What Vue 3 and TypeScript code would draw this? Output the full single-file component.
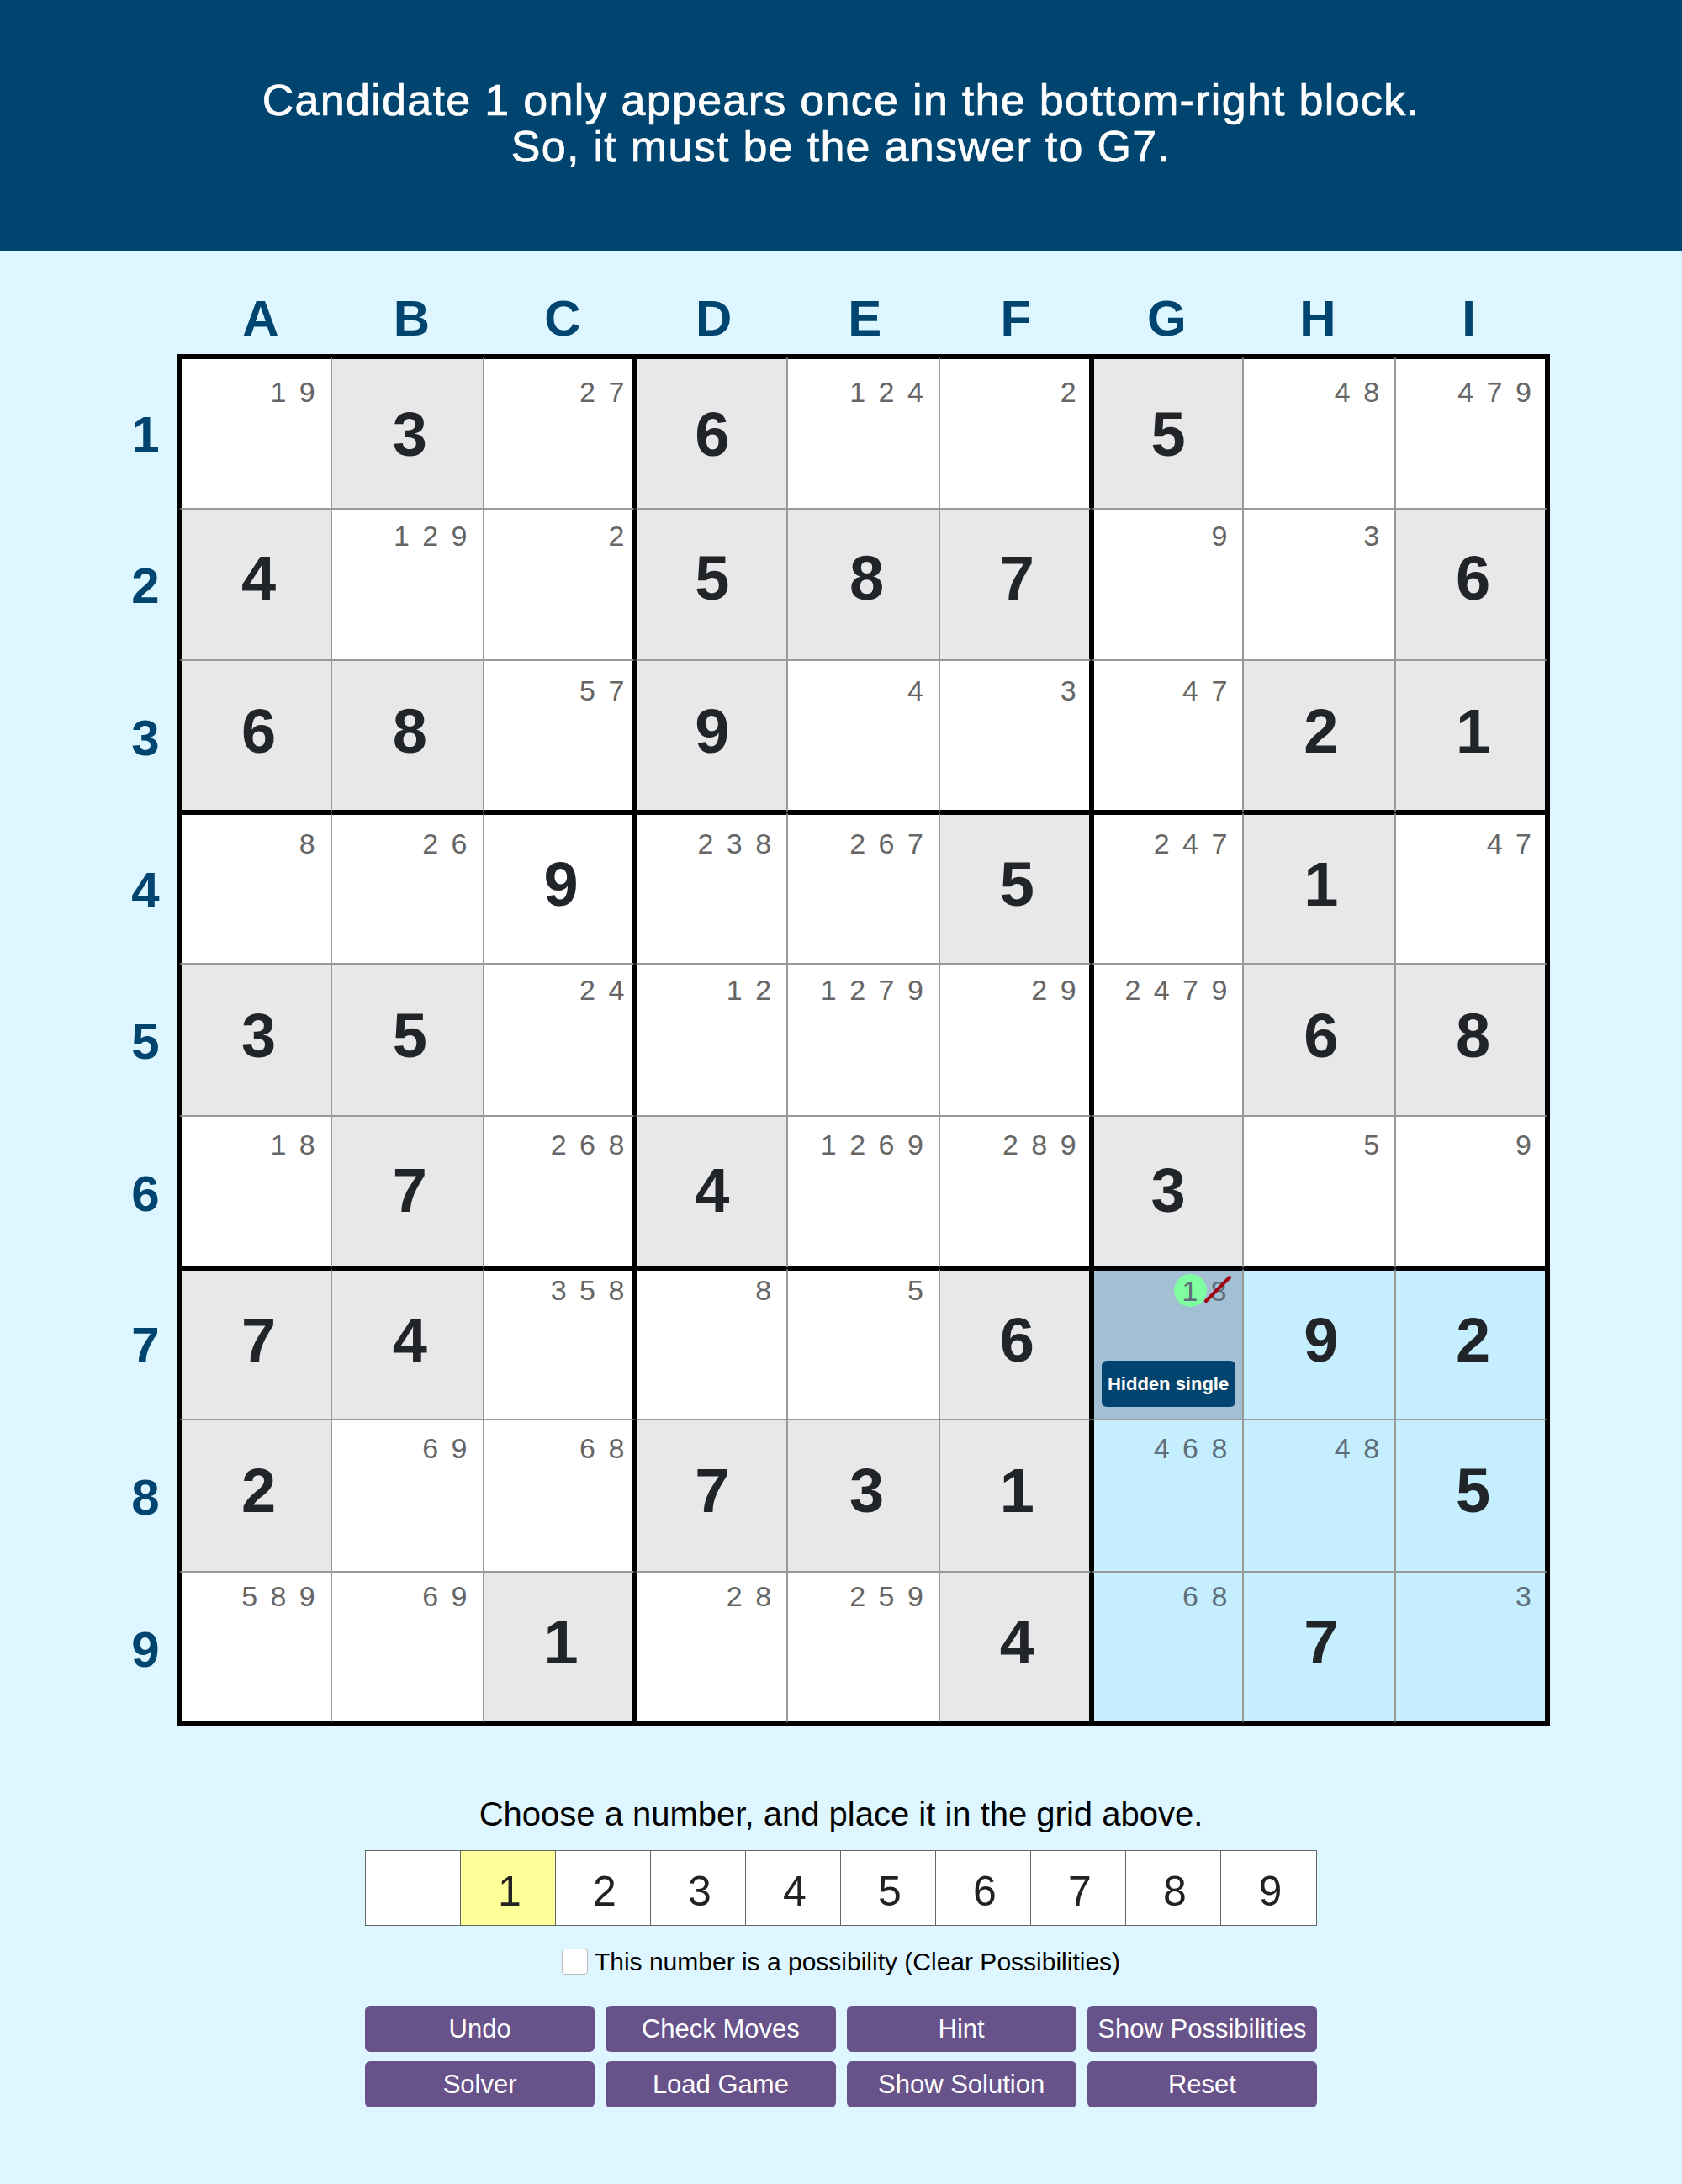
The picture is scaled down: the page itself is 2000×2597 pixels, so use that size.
<script setup lang="ts">
type Cell = { value?: number; cands?: string };

const givens = [
  "030600500",
  "400587006",
  "680900021",
  "009005010",
  "350000068",
  "070400300",
  "740006092",
  "200731005",
  "001004070",
];
const candidates: Record<string, string> = {
  "0,0": "1 9", "0,2": "2 7", "0,4": "1 2 4", "0,5": "2", "0,7": "4 8", "0,8": "4 7 9",
  "1,1": "1 2 9", "1,2": "2", "1,6": "9", "1,7": "3",
  "2,2": "5 7", "2,4": "4", "2,5": "3", "2,6": "4 7",
  "3,0": "8", "3,1": "2 6", "3,3": "2 3 8", "3,4": "2 6 7", "3,6": "2 4 7", "3,8": "4 7",
  "4,2": "2 4", "4,3": "1 2", "4,4": "1 2 7 9", "4,5": "2 9", "4,6": "2 4 7 9",
  "5,0": "1 8", "5,2": "2 6 8", "5,4": "1 2 6 9", "5,5": "2 8 9", "5,7": "5", "5,8": "9",
  "6,2": "3 5 8", "6,3": "8", "6,4": "5",
  "7,1": "6 9", "7,2": "6 8", "7,6": "4 6 8", "7,7": "4 8",
  "8,0": "5 8 9", "8,1": "6 9", "8,3": "2 8", "8,4": "2 5 9", "8,6": "6 8", "8,8": "3",
};

const candTop = [30, 20, 24, 25, 19, 22, 14, 22, 17];
const candRight = [15, 15, 7, 15, 15, 12, 15, 15, 13];
const digitShiftY = [2, -7, -4, -5, -5, 0, -5, -5, -5];
const digitShiftX = [3, 3, 3, 0, 4, 3, 0, 2, 3];

const cells: (Cell & { r: number; c: number })[] = [];
for (let r = 0; r < 9; r++) {
  for (let c = 0; c < 9; c++) {
    const v = Number(givens[r][c]);
    cells.push({ r, c, value: v || undefined, cands: candidates[`${r},${c}`] });
  }
}

function cellClass(cell: { r: number; c: number; value?: number }) {
  const { r, c, value } = cell;
  const isTarget = r === 6 && c === 6;
  const inBlock = r >= 6 && c >= 6;
  const plainGiven = r === 3 && c === 2;
  return {
    given: !!value && !inBlock && !plainGiven,
    block: inBlock && !isTarget,
    target: isTarget,
    "thick-l": c % 3 === 0,
    "thick-r": c % 3 === 2,
    "thick-t": r % 3 === 0,
    "thick-b": r % 3 === 2,
  };
}
function candStyle(cell: { r: number; c: number }) {
  const borderTop = cell.r % 3 === 0 ? 3 : 1;
  return {
    paddingTop: `${candTop[cell.r] - 5 - borderTop}px`,
    paddingRight: `${candRight[cell.c]}px`,
  };
}
function digitStyle(cell: { r: number; c: number }) {
  return {
    marginTop: `${digitShiftY[cell.r] * 2}px`,
    marginLeft: `calc(50% - 20.5px + ${digitShiftX[cell.c]}px)`,
  };
}

const columns = ["A", "B", "C", "D", "E", "F", "G", "H", "I"];
const picker = ["", "1", "2", "3", "4", "5", "6", "7", "8", "9"];
const buttons = [
  "Undo", "Check Moves", "Hint", "Show Possibilities",
  "Solver", "Load Game", "Show Solution", "Reset",
];
</script>

<template>
  <div class="page">
    <header class="banner">
      <p>Candidate 1 only appears once in the bottom-right block.<br />So, it must be the answer to G7.</p>
    </header>

    <div class="col-labels">
      <span v-for="l in columns" :key="l">{{ l }}</span>
    </div>

    <div class="board-row">
      <div class="row-labels">
        <span v-for="n in 9" :key="n">{{ n }}</span>
      </div>
      <div class="board">
        <div v-for="cell in cells" :key="`${cell.r}-${cell.c}`" class="cell" :class="cellClass(cell)">
          <span v-if="cell.value" class="digit" :style="digitStyle(cell)">{{ cell.value }}</span>
          <div v-else-if="cell.cands" class="cand" :style="candStyle(cell)">{{ cell.cands }}</div>
          <template v-if="cell.r === 6 && cell.c === 6">
            <span class="mark"></span>
            <span class="cand-one">1</span>
            <span class="cand-eight">8</span>
            <svg class="strike" width="34" height="34" viewBox="0 0 34 34">
              <line x1="3" y1="31" x2="31" y2="3" stroke="#a00010" stroke-width="4" stroke-linecap="round" />
            </svg>
            <span class="badge">Hidden single</span>
          </template>
        </div>
      </div>
    </div>

    <p class="instruction">Choose a number, and place it in the grid above.</p>

    <div class="picker">
      <div v-for="(p, i) in picker" :key="i" class="pick" :class="{ active: p === '1' }">{{ p }}</div>
    </div>

    <label class="possibility">
      <span class="box"></span>
      <span>This number is a possibility (Clear Possibilities)</span>
    </label>

    <div class="buttons">
      <button v-for="b in buttons" :key="b" type="button">{{ b }}</button>
    </div>
  </div>
</template>

<style scoped>
.page {
  width: 2000px;
  height: 2597px;
  background: #ddf6ff;
  font-family: "Liberation Sans", Arial, sans-serif;
  display: flex;
  flex-direction: column;
  align-items: center;
  overflow: hidden;
}
.banner {
  width: 100%;
  height: 298px;
  flex: none;
  background: #004570;
  color: #fff;
  display: flex;
  align-items: center;
  justify-content: center;
  text-align: center;
  box-sizing: border-box;
  padding-bottom: 5px;
}
.banner p {
  margin: 0;
  font-size: 52px;
  line-height: 55px;
  letter-spacing: 1.3px;
  -webkit-text-stroke: 0.7px #fff;
}
.col-labels {
  align-self: flex-start;
  margin: 46px 0 7px 220px;
  display: grid;
  grid-template-columns: repeat(9, 179.6px);
  text-align: center;
  font-size: 60px;
  line-height: 70px;
  font-weight: 700;
  color: #004570;
}
.board-row {
  align-self: flex-start;
  display: flex;
}
.row-labels {
  width: 210px;
  box-sizing: border-box;
  padding: 5px 0 0 133px;
  display: grid;
  grid-template-rows: repeat(9, 180.6px);
  align-content: start;
  font-size: 60px;
  font-weight: 700;
  color: #004570;
}
.row-labels span {
  width: 80px;
  display: flex;
  align-items: center;
  justify-content: center;
}
.board {
  border: 3px solid #000;
  display: grid;
  grid-template-columns: repeat(9, 180.78px);
  grid-template-rows: repeat(9, 180.6px);
  background: #fff;
}
.cell {
  position: relative;
  box-sizing: border-box;
  border: 1px solid #999;
  background: #fff;
  display: flex;
  align-items: flex-start;
  justify-content: flex-end;
}
.cell.thick-l { border-left: 3px solid #000; }
.cell.thick-r { border-right: 3px solid #000; }
.cell.thick-t { border-top: 3px solid #000; }
.cell.thick-b { border-bottom: 3px solid #000; }
.cell.given { background: #e8e8e8; }
.cell.block { background: #c5efff; }
.cell.target { background: #a3bfd3; }
.digit {
  align-self: center;
  margin-right: auto;
  font-size: 74px;
  line-height: 1;
  font-weight: 700;
  color: #212529;
}
.cand {
  font-size: 34px;
  line-height: 34px;
  letter-spacing: 3px;
  white-space: pre;
  color: #666;
}
.cell.block .cand { color: #5f6e7a; }
.mark {
  position: absolute;
  left: 95px;
  top: 4px;
  width: 39px;
  height: 39px;
  border-radius: 50%;
  background: #7fff9f;
}
.cand-one,
.cand-eight {
  position: absolute;
  top: 7px;
  font-size: 34px;
  line-height: 34px;
  color: #5f6e7a;
}
.cand-one { left: 105px; }
.cand-eight { left: 139px; }
.strike {
  position: absolute;
  left: 130px;
  top: 5px;
}
.badge {
  position: absolute;
  left: 9px;
  top: 107.5px;
  width: 159px;
  height: 55px;
  border-radius: 6px;
  background: #004570;
  color: #fff;
  font-size: 22px;
  font-weight: 700;
  display: flex;
  align-items: center;
  justify-content: center;
}
.instruction {
  margin: 80px 0 18px;
  font-size: 40px;
  line-height: 50px;
  color: #000;
}
.picker {
  width: 1132px;
  height: 90px;
  box-sizing: border-box;
  border: 1px solid #666;
  display: grid;
  grid-template-columns: repeat(10, 1fr);
  background: #fff;
}
.pick {
  border-right: 1px solid #666;
  display: flex;
  align-items: center;
  justify-content: center;
  padding: 8px 0 0 4px;
  font-size: 50px;
  color: #222;
}
.pick:last-child { border-right: 0; }
.pick.active { background: #ffff99; }
.possibility {
  margin-top: 27px;
  height: 31px;
  display: flex;
  align-items: center;
  gap: 8px;
  font-size: 30px;
  color: #000;
}
.box {
  width: 31px;
  height: 31px;
  box-sizing: border-box;
  background: #fff;
  border: 1px solid #bbb;
  border-radius: 4px;
}
.buttons {
  margin-top: 37px;
  width: 1132px;
  display: grid;
  grid-template-columns: repeat(4, 1fr);
  gap: 11px 13px;
}
button {
  height: 55px;
  border: 0;
  border-radius: 6px;
  padding: 0;
  background: #68528a;
  color: #fff;
  font-family: inherit;
  font-size: 31px;
}
</style>
